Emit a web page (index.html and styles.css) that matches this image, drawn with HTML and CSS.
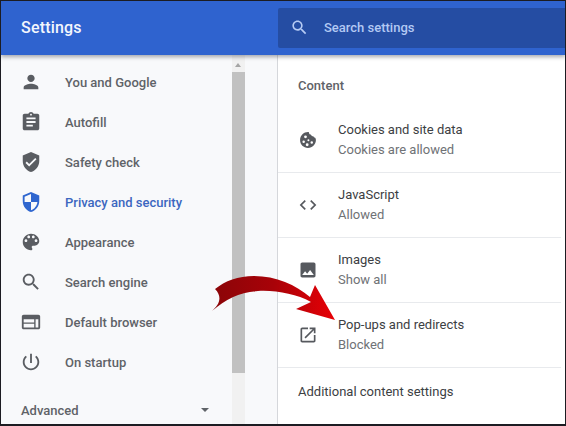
FILE: index.html
```html
<!DOCTYPE html>
<html lang="en">
<head>
<meta charset="utf-8">
<title>Settings</title>
<link rel="stylesheet" href="styles.css">
</head>
<body>
<div class="frame">
  <header class="topbar">
    <div class="brand">Settings</div>
    <div class="search">
      <svg class="search-icon" viewBox="0 0 24 24"><path d="M15.5 14h-.79l-.28-.27C15.41 12.59 16 11.11 16 9.5 16 5.91 13.09 3 9.5 3S3 5.91 3 9.5 5.91 16 9.5 16c1.61 0 3.09-.59 4.23-1.57l.27.28v.79l5 4.99L20.49 19l-4.99-5zm-6 0C7.01 14 5 11.99 5 9.5S7.01 5 9.5 5 14 7.01 14 9.5 11.99 14 9.5 14z"/></svg>
      <span>Search settings</span>
    </div>
  </header>
  <div class="body">
    <nav class="sidebar">
      <ul class="menu">
        <li class="item"><svg class="icon" viewBox="0 0 24 24"><path d="M12 12c2.21 0 4-1.79 4-4s-1.79-4-4-4-4 1.79-4 4 1.79 4 4 4zm0 2c-2.67 0-8 1.34-8 4v2h16v-2c0-2.66-5.33-4-8-4z"/></svg>You and Google</li>
        <li class="item"><svg class="icon" viewBox="0 0 24 24"><path d="M19 3h-4.18C14.4 1.84 13.3 1 12 1c-1.3 0-2.4.84-2.82 2H5c-1.1 0-2 .9-2 2v14c0 1.1.9 2 2 2h14c1.1 0 2-.9 2-2V5c0-1.1-.9-2-2-2zm-7 0c.55 0 1 .45 1 1s-.45 1-1 1-1-.45-1-1 .45-1 1-1zm2 14H7v-2h7v2zm3-4H7v-2h10v2zm0-4H7V7h10v2z"/></svg>Autofill</li>
        <li class="item"><svg class="icon" viewBox="0 0 24 24"><path d="M12 1L3 5v6c0 5.55 3.84 10.74 9 12 5.16-1.26 9-6.45 9-12V5l-9-4zm-2 16l-4-4 1.41-1.41L10 14.17l6.59-6.59L18 9l-8 8z"/></svg>Safety check</li>
        <li class="item active"><svg class="icon" viewBox="0 0 24 24"><path d="M12 1L3 5v6c0 5.55 3.84 10.74 9 12 5.16-1.26 9-6.45 9-12V5l-9-4zm0 10.99h7c-.53 4.12-3.28 7.79-7 8.94V12H5V6.3l7-3.11v8.8z"/></svg>Privacy and security</li>
        <li class="item"><svg class="icon" viewBox="0 0 24 24"><path d="M12 3c-4.97 0-9 4.03-9 9s4.03 9 9 9c.83 0 1.5-.67 1.5-1.5 0-.39-.15-.74-.39-1.01-.23-.26-.38-.61-.38-.99 0-.83.67-1.5 1.5-1.5H16c2.76 0 5-2.24 5-5 0-4.42-4.03-8-9-8zm-5.5 9c-.83 0-1.5-.67-1.5-1.5S5.67 9 6.5 9 8 9.67 8 10.5 7.33 12 6.5 12zm3-4C8.67 8 8 7.33 8 6.5S8.67 5 9.5 5s1.5.67 1.5 1.5S10.33 8 9.5 8zm5 0c-.83 0-1.5-.67-1.5-1.5S13.67 5 14.5 5s1.5.67 1.5 1.5S15.33 8 14.5 8zm3 4c-.83 0-1.5-.67-1.5-1.5S16.67 9 17.5 9s1.5.67 1.5 1.5-.67 1.5-1.5 1.5z"/></svg>Appearance</li>
        <li class="item"><svg class="icon" viewBox="0 0 24 24"><path d="M15.5 14h-.79l-.28-.27C15.41 12.59 16 11.11 16 9.5 16 5.91 13.09 3 9.5 3S3 5.91 3 9.5 5.91 16 9.5 16c1.61 0 3.09-.59 4.23-1.57l.27.28v.79l5 4.99L20.49 19l-4.99-5zm-6 0C7.01 14 5 11.99 5 9.5S7.01 5 9.5 5 14 7.01 14 9.5 11.99 14 9.5 14z"/></svg>Search engine</li>
        <li class="item"><svg class="icon" viewBox="0 0 24 24"><path fill-rule="evenodd" d="M4 4h16c1.100 0 2 .9 2 2v12c0 1.100-.9 2-2 2H4c-1.100 0-2-.9-2-2V6c0-1.100.9-2 2-2zm0 5v3.500h11.500V9H4zm0 5v4h11.500v-4H4zm13 -5v9h3V9h-3z"/></svg>Default browser</li>
        <li class="item"><svg class="icon" viewBox="0 0 24 24"><path d="M13 3h-2v10h2V3zm4.83 2.17l-1.42 1.42C17.99 7.86 19 9.81 19 12c0 3.87-3.13 7-7 7s-7-3.13-7-7c0-2.19 1.01-4.14 2.58-5.42L6.17 5.17C4.23 6.82 3 9.26 3 12c0 4.97 4.03 9 9 9s9-4.03 9-9c0-2.74-1.23-5.18-3.17-6.83z"/></svg>On startup</li>
      </ul>
      <div class="advanced"><span>Advanced</span><i class="caret"></i></div>
    </nav>
    <div class="scrollbar">
      <i class="scroll-up"></i>
      <div class="thumb"></div>
    </div>
    <div class="gutter"></div>
    <main class="content">
      <h2 class="heading">Content</h2>
      <div class="row">
        <svg class="icon" viewBox="0 0 24 24"><path fill-rule="evenodd" d="M12 2.5c.9 0 1.2.2 1.3 1 .1 1.2 1 2 2.1 2 .5 1.4 1.700 2.200 3 2.100.3 1 1.100 1.600 2.200 1.700.5.800.9 1.700.9 2.700 0 5-4 9.500-9.500 9.500S2.500 17.500 2.500 12 7 2.500 12 2.500zM9 6.500a1.700 1.700 0 1 0 0 3.400 1.700 1.700 0 0 0 0-3.400zM6.800 12.500a1.500 1.500 0 1 0 0 3 1.500 1.500 0 0 0 0-3zM12.500 11a1.200 1.200 0 1 0 0 2.400 1.200 1.200 0 0 0 0-2.400zM11 16a1.700 1.700 0 1 0 0 3.400 1.700 1.700 0 0 0 0-3.400zM16.500 13.500a1.500 1.500 0 1 0 0 3 1.500 1.500 0 0 0 0-3z"/></svg>
        <div class="text"><div class="title">Cookies and site data</div><div class="sub">Cookies are allowed</div></div>
      </div>
      <div class="row">
        <svg class="icon" viewBox="0 0 24 24"><path d="M9.4 16.6L4.8 12l4.6-4.6L8 6l-6 6 6 6 1.4-1.4zm5.2 0l4.6-4.6-4.6-4.6L16 6l6 6-6 6-1.4-1.4z"/></svg>
        <div class="text"><div class="title">JavaScript</div><div class="sub">Allowed</div></div>
      </div>
      <div class="row">
        <svg class="icon" viewBox="0 0 24 24"><path d="M21 19V5c0-1.100-.9-2-2-2H5c-1.100 0-2 .9-2 2v14c0 1.100.9 2 2 2h14c1.100 0 2-.9 2-2zM8.500 13.500l2.500 3.010L14.500 12l4.500 6H5l3.500-4.500z"/></svg>
        <div class="text"><div class="title">Images</div><div class="sub">Show all</div></div>
      </div>
      <div class="row">
        <svg class="icon" viewBox="0 0 24 24"><path d="M19 19H5V5h7V3H5c-1.110 0-2 .9-2 2v14c0 1.100.89 2 2 2h14c1.100 0 2-.9 2-2v-7h-2v7zM14 3v2h3.590l-9.830 9.830 1.410 1.410L19 6.410V10h2V3h-7z"/></svg>
        <div class="text"><div class="title">Pop-ups and redirects</div><div class="sub">Blocked</div></div>
      </div>
      <div class="row-last">Additional content settings</div>
    </main>
  </div>
  <svg class="arrow" viewBox="0 0 566 426" aria-hidden="true">
    <defs>
      <linearGradient id="arrowfill" x1="212" y1="0" x2="335" y2="0" gradientUnits="userSpaceOnUse">
        <stop offset="0" stop-color="#8a0508"/>
        <stop offset="0.5" stop-color="#a80208"/>
        <stop offset="1" stop-color="#e80006"/>
      </linearGradient>
    </defs>
    <path fill="url(#arrowfill)" d="M212 311 C219 305 223 297 215 289 C225 281 238 276 254 276 C276 276 296 285 310 297 L315 285 L335 320 L296 309 L311 302 C296 294 276 290 258 291 C240 292 226 299 212 311 Z"/>
  </svg>
</div>
</body>
</html>
```
FILE: styles.css
```css
* { box-sizing: border-box; }
html, body { margin: 0; padding: 0; height: 100%; overflow: hidden; background: #fff; }
body { font-family: Roboto, "Liberation Sans", Arial, sans-serif; }

.frame {
  position: relative;
  width: 566px;
  height: 426px;
  display: flex;
  flex-direction: column;
  border-style: solid;
  border-color: #1c1c22;
  border-width: 1px 1px 2px 1px;
  overflow: hidden;
}

.topbar {
  position: relative;
  z-index: 2;
  flex: 0 0 54px;
  display: flex;
  align-items: center;
  justify-content: space-between;
  padding: 6px 0 7px 20px;
  background: #2f63cf;
  box-shadow: 0 2px 4px rgba(60, 64, 80, .45);
}
.brand { font-size: 16px; font-weight: 500; color: #f3f6fd; letter-spacing: .2px; }
.search {
  width: 287px;
  height: 40px;
  display: flex;
  align-items: center;
  gap: 15px;
  padding-left: 12px;
  background: #254da3;
  border-radius: 2px 0 0 2px;
  color: #b3c9f3;
  font-size: 13px;
  font-weight: 500;
}
.search-icon { width: 19px; height: 19px; fill: #b6cbf4; flex: none; }

.body { flex: 1; display: flex; min-height: 0; }

.sidebar { width: 231px; flex: none; background: #f8f9fb; padding-top: 7px; }
.menu { list-style: none; margin: 0; padding: 0; }
.item {
  height: 40px;
  display: flex;
  align-items: center;
  gap: 23px;
  padding-left: 19px;
  font-size: 13px;
  font-weight: 500;
  color: #5f6368;
}
.item .icon { width: 22px; height: 22px; fill: #5a5d62; flex: none; }
.item.active { color: #3c67c0; }
.item.active .icon { fill: #2f66cf; }

.advanced {
  display: flex;
  align-items: center;
  justify-content: space-between;
  height: 40px;
  margin-top: 8px;
  padding: 0 23px 0 20px;
  font-size: 13px;
  font-weight: 500;
  color: #5f6368;
}
.caret { width: 0; height: 0; border-style: solid; border-width: 4px 4.5px 0; border-color: #5f6368 transparent transparent; }

.scrollbar { width: 13px; flex: none; background: #f1f1f1; padding-top: 17px; position: relative; }
.scroll-up {
  position: absolute;
  top: 8px;
  left: 3px;
  width: 0;
  height: 0;
  border-style: solid;
  border-width: 0 3.5px 4px;
  border-color: transparent transparent #a5a5a5;
}
.thumb { height: 301px; background: #c1c1c1; }

.gutter { width: 33px; flex: none; background: #f8f9fb; border-right: 1px solid #d5d7db; }

.content { flex: 1; background: #fff; min-width: 0; }
.heading { margin: 0; height: 53px; padding: 21px 0 0 20px; font-size: 13px; line-height: 20px; font-weight: 500; color: #5f6368; }
.row {
  height: 65px;
  display: flex;
  align-items: center;
  gap: 20px;
  padding-left: 20px;
  margin-right: 4px;
  border-bottom: 1px solid #e8eaed;
}
.row .icon { width: 20px; height: 20px; fill: #56595e; flex: none; }
.text { display: flex; flex-direction: column; gap: 0; }
.title { font-size: 13px; line-height: 20px; color: #3c4043; }
.sub { font-size: 13px; line-height: 20px; color: #6f7276; }
.row-last { padding: 14px 0 0 20px; font-size: 13px; line-height: 20px; color: #3c4043; }

.arrow { position: absolute; left: -1px; top: -1px; width: 566px; height: 426px; z-index: 3; pointer-events: none; }
```
